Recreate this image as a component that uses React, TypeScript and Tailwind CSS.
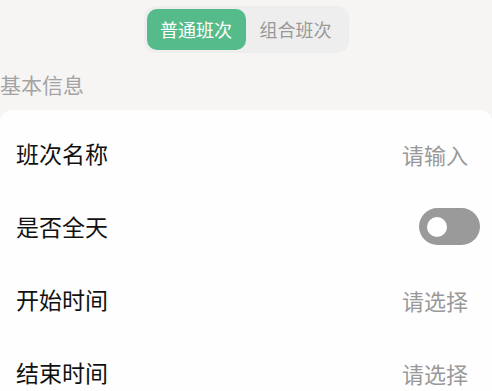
import { useState } from "react";

type Row = {
  label: string;
  placeholder?: string;
  toggle?: boolean;
};

const rows: Row[] = [
  { label: "班次名称", placeholder: "请输入" },
  { label: "是否全天", toggle: true },
  { label: "开始时间", placeholder: "请选择" },
  { label: "结束时间", placeholder: "请选择" },
];

export default function App() {
  const [tab, setTab] = useState<number>(0);
  const [allDay, setAllDay] = useState<boolean>(false);

  return (
    <div
      className="w-[492px] h-[391px] overflow-hidden bg-[#f6f5f3]"
      style={{ fontFamily: '"Noto Sans CJK SC", "Noto Sans", sans-serif' }}
    >
      <div className="flex justify-center pt-[6px]">
        <div className="flex p-[3px] bg-[#eeeeee] rounded-[12px]">
          {["普通班次", "组合班次"].map((name, idx) => (
            <button
              key={idx}
              onClick={() => setTab(idx)}
              className={
                idx === tab
                  ? "w-[99px] h-[41px] flex items-center justify-center rounded-[10px] bg-[#55bb8a] text-white text-[18px]"
                  : "w-[100px] h-[41px] flex items-center justify-center rounded-[10px] text-[#999999] text-[18px]"
              }
            >
              {name}
            </button>
          ))}
        </div>
      </div>

      <div className="mt-[16px] h-[30px] flex items-center text-[21px] text-[#a3a3a3] leading-none">基本信息</div>

      <div className="mt-[11px] bg-[#fefefe] rounded-tl-[12px] rounded-tr-[12px] pt-[7px]">
        {rows.map((row, idx) => (
          <div key={idx} className="h-[73px] flex items-center justify-between pl-[16px] pr-[12px]">
            <div className="text-[23px] text-[#111111] leading-none">{row.label}</div>
            {row.toggle ? (
              <button
                onClick={() => setAllDay(!allDay)}
                className={
                  allDay
                    ? "w-[61px] h-[37px] rounded-full bg-[#55bb8a] flex items-center justify-end pr-[8px]"
                    : "w-[61px] h-[37px] rounded-full bg-[#9a9a9a] flex items-center pl-[8px]"
                }
              >
                <span className="w-[20px] h-[20px] rounded-full bg-white block"></span>
              </button>
            ) : (
              <div className="text-[22px] text-[#999999] leading-none pr-[12px]">{row.placeholder}</div>
            )}
          </div>
        ))}
      </div>
    </div>
  );
}
